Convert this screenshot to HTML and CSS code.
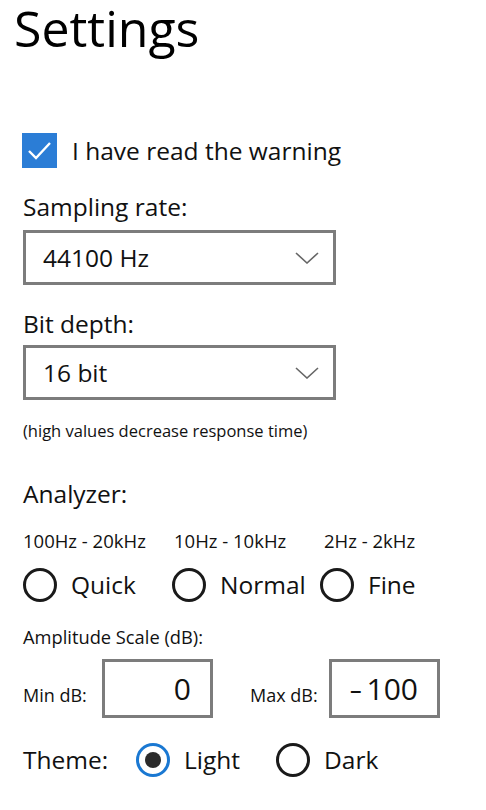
FILE: index.html
```html
<!DOCTYPE html>
<html>
<head>
<meta charset="utf-8">
<link rel="stylesheet" href="styles.css">
</head>
<body>
<div class="page">
  <h1 class="title">Settings</h1>

  <div class="check-row">
    <span class="checkbox">
      <svg viewBox="0 0 35 35" width="35" height="35"><path d="M7 18 L14 25 L28 10" fill="none" stroke="#fff" stroke-width="2.4"/></svg>
    </span>
    <span class="big-text">I have read the warning</span>
  </div>

  <div class="label label-sampling big-text">Sampling rate:</div>
  <div class="select select-1">
    <span class="big-text">44100 Hz</span>
    <svg class="chevron" viewBox="0 0 24 12" width="24" height="12"><path d="M1 1 L12 11 L23 1" fill="none" stroke="#666" stroke-width="1.6"/></svg>
  </div>

  <div class="label label-bit big-text">Bit depth:</div>
  <div class="select select-2">
    <span class="big-text">16 bit</span>
    <svg class="chevron" viewBox="0 0 24 12" width="24" height="12"><path d="M1 1 L12 11 L23 1" fill="none" stroke="#666" stroke-width="1.6"/></svg>
  </div>

  <div class="hint">(high values decrease response time)</div>

  <div class="label label-analyzer big-text">Analyzer:</div>

  <div class="freq-row">
    <span class="freq f1">100Hz - 20kHz</span>
    <span class="freq f2">10Hz - 10kHz</span>
    <span class="freq f3">2Hz - 2kHz</span>
  </div>

  <div class="radio-row">
    <span class="opt"><span class="radio"></span><span class="big-text">Quick</span></span>
    <span class="opt"><span class="radio"></span><span class="big-text">Normal</span></span>
    <span class="opt"><span class="radio"></span><span class="big-text">Fine</span></span>
  </div>

  <div class="amp">Amplitude Scale (dB):</div>

  <div class="db-row">
    <span class="db-label">Min dB:</span>
    <span class="numbox nb-min">0</span>
    <span class="db-label db-max">Max dB:</span>
    <span class="numbox nb-max"><span class="minus">-</span>100</span>
  </div>

  <div class="theme-row">
    <span class="big-text theme-label">Theme:</span>
    <span class="topt"><span class="radio radio-on"><span class="dot"></span></span><span class="big-text">Light</span></span>
    <span class="topt topt-dark"><span class="radio"></span><span class="big-text">Dark</span></span>
  </div>
</div>
</body>
</html>
```
FILE: styles.css
```css
html, body {
  margin: 0;
  padding: 0;
  background: #fff;
}
body {
  font-family: "Open Sans", "Noto Sans", sans-serif;
  color: #000;
}
.page {
  padding-left: 23px;
  display: flex;
  flex-direction: column;
  align-items: flex-start;
}
.title {
  margin: 0 0 0 -9px;
  font-size: 50px;
  font-weight: 400;
  line-height: 56px;
  color: #000;
}
.big-text {
  font-size: 24.5px;
  line-height: 30px;
  color: #111;
}
.check-row {
  margin-top: 77px;
  height: 35px;
  display: flex;
  align-items: center;
  gap: 15px;
  margin-left: -1px;
}
.checkbox {
  width: 35px;
  height: 35px;
  background: #2b7dd6;
  display: block;
}
.checkbox svg { display: block; }
.label {
  height: 30px;
  display: flex;
  align-items: center;
}
.label-sampling { margin-top: 24px; }
.label-bit { margin-top: 24px; }
.label-analyzer { margin-top: 38px; }
.select {
  box-sizing: border-box;
  width: 313px;
  height: 55px;
  border: 3px solid #7c7c7c;
  display: flex;
  align-items: center;
  justify-content: space-between;
  padding: 0 14px 0 17px;
}
.select-1 { margin-top: 8px; }
.select-2 { margin-top: 6px; }
.chevron { display: block; }
.hint {
  margin-top: 21px;
  height: 20px;
  font-size: 16.5px;
  line-height: 20px;
  color: #111;
}
.freq-row {
  margin-top: 22px;
  height: 20px;
  display: grid;
  grid-template-columns: 151px 150px auto;
  font-size: 18.5px;
  line-height: 20px;
  color: #111;
}
.radio-row {
  margin-top: 17px;
  height: 34px;
  display: grid;
  grid-template-columns: 149px 148px auto;
}
.opt, .topt {
  display: flex;
  align-items: center;
  gap: 14px;
}
.radio {
  box-sizing: border-box;
  width: 34px;
  height: 34px;
  border: 3px solid #1a1a1a;
  border-radius: 50%;
  display: flex;
  align-items: center;
  justify-content: center;
}
.radio-on {
  border-color: #1a78d2;
}
.dot {
  width: 16px;
  height: 16px;
  border-radius: 50%;
  background: #2b2b2b;
}
.amp {
  margin-top: 25px;
  height: 20px;
  font-size: 18.3px;
  line-height: 20px;
  color: #111;
}
.db-row {
  margin-top: 12px;
  display: flex;
  align-items: center;
  height: 59px;
}
.db-label {
  font-size: 18px;
  color: #111;
  width: 79px;
  padding-top: 12px;
}
.db-max {
  margin-left: 37px;
}
.numbox {
  box-sizing: border-box;
  width: 111px;
  height: 59px;
  border: 3px solid #7c7c7c;
  font-size: 30px;
  line-height: 53px;
  text-align: right;
  padding-right: 19px;
  color: #111;
}
.minus {
  display: inline-block;
  margin-right: 6px;
  transform: scaleX(1.35);
}
.theme-row {
  margin-top: 25px;
  height: 34px;
  display: flex;
  align-items: center;
}
.theme-label {
  width: 113px;
}
.topt-dark {
  margin-left: 36px;
}
```
